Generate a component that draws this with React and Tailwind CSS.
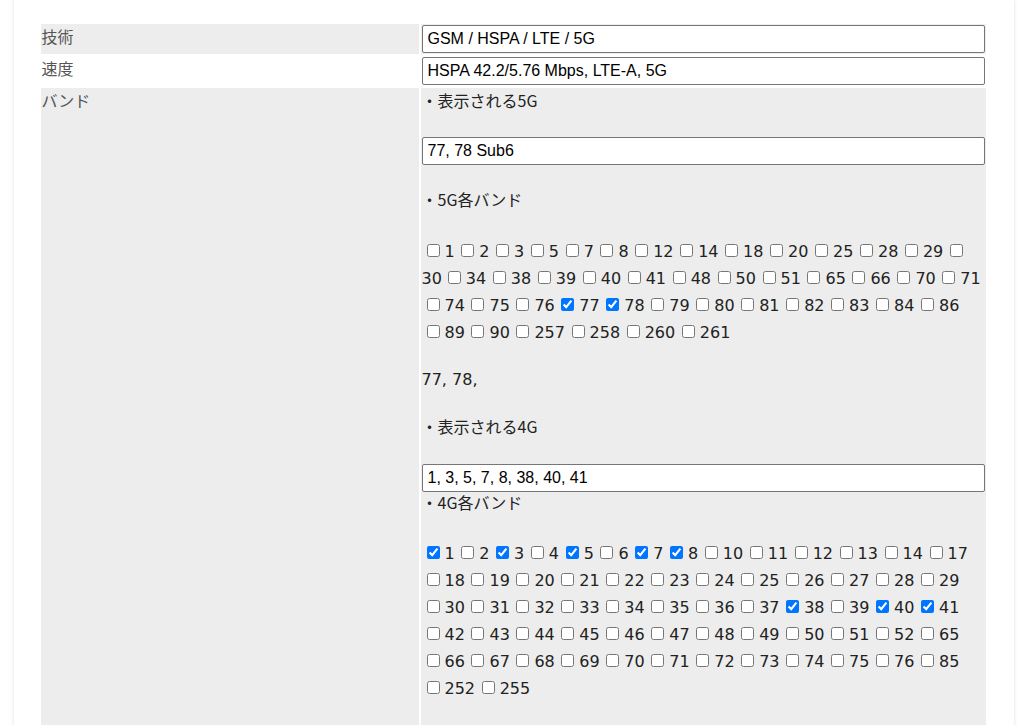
import React from 'react';

// bands: "*" = checked, "|" = lone checkbox at row end, "-" = label that wrapped from previous row
const BANDS_5G = [
  '1 2 3 5 7 8 12 14 18 20 25 28 29 |',
  '-30 34 38 39 40 41 48 50 51 65 66 70 71',
  '74 75 76 *77 *78 79 80 81 82 83 84 86',
  '89 90 257 258 260 261',
];

const BANDS_4G = [
  '*1 2 *3 4 *5 6 *7 *8 10 11 12 13 14 17',
  '18 19 20 21 22 23 24 25 26 27 28 29',
  '30 31 32 33 34 35 36 37 *38 39 *40 *41',
  '42 43 44 45 46 47 48 49 50 51 52 65',
  '66 67 68 69 70 71 72 73 74 75 76 85',
  '252 255',
];

const Box = ({ checked }) => (
  <input
    type="checkbox"
    defaultChecked={checked}
    className="m-0 mb-[3px] ml-[5px] mr-[5px] h-[13px] w-[13px] shrink-0"
  />
);

const BandRow = ({ row }) => (
  <div className="flex h-[27px] items-center whitespace-nowrap">
    {row.split(' ').map((tok, i) => {
      if (tok === '|') return <Box key={i} />;
      if (tok.startsWith('-')) {
        return (
          <span key={i} className="pr-[1px]">
            {tok.slice(1)}
          </span>
        );
      }
      const checked = tok.startsWith('*');
      return (
        <span key={i} className="flex items-center">
          <Box checked={checked} />
          <span className="pr-[1.6px]">{checked ? tok.slice(1) : tok}</span>
        </span>
      );
    })}
  </div>
);

const TextBox = ({ value }) => (
  <input
    type="text"
    defaultValue={value}
    className="block h-[28px] w-full rounded-[2px] border border-[#767676] bg-white px-[5px] font-['Liberation_Sans',Arial,sans-serif] text-[16px] text-black outline-none"
  />
);

const Label = ({ children }) => (
  <div className="px-[1px] py-[1px] text-[16px] leading-[23px] text-[#555]">{children}</div>
);

export default function App() {
  return (
    <div className="h-screen overflow-hidden bg-white font-['Noto_Sans_CJK_JP',sans-serif]">
      <div className="mx-auto min-h-[800px] w-[1000px] bg-white px-[27px] pt-[24px] shadow-[0_0_4px_rgba(0,0,0,0.13)]">
        <div className="grid grid-cols-[378px_565px] gap-x-[2px] gap-y-[2px]">
          {/* 技術 */}
          <div className="bg-[#ededed]">
            <Label>技術</Label>
          </div>
          <div className="bg-[#ededed] p-[1px]">
            <TextBox value="GSM / HSPA / LTE / 5G" />
          </div>

          {/* 速度 */}
          <div className="bg-white">
            <Label>速度</Label>
          </div>
          <div className="bg-white p-[1px]">
            <TextBox value="HSPA 42.2/5.76 Mbps, LTE-A, 5G" />
          </div>

          {/* バンド */}
          <div className="bg-[#ededed]">
            <Label>バンド</Label>
          </div>
          <div className="bg-[#ededed] p-[1px] pb-[60px] text-[16px] text-[#222]">
            <div className="h-[23px] leading-[23px]">・表示される5G</div>
            <div className="mt-[25px]">
              <TextBox value="77, 78 Sub6" />
            </div>
            <div className="mt-[23px] h-[23px] leading-[23px]">・5G各バンド</div>

            <div className="mt-[27px] font-['DejaVu_Sans','Noto_Sans_CJK_JP',sans-serif] text-[16px]">
              {BANDS_5G.map((row, i) => (
                <BandRow key={i} row={row} />
              ))}
            </div>

            <div className="mt-[22px] h-[23px] font-['DejaVu_Sans','Noto_Sans_CJK_JP',sans-serif] leading-[23px]">
              77, 78,
            </div>
            <div className="mt-[24px] h-[23px] leading-[23px]">・表示される4G</div>
            <div className="mt-[26px]">
              <TextBox value="1, 3, 5, 7, 8, 38, 40, 41" />
            </div>
            <div className="h-[20px] leading-[20px]">・4G各バンド</div>

            <div className="mt-[28px] font-['DejaVu_Sans','Noto_Sans_CJK_JP',sans-serif] text-[16px]">
              {BANDS_4G.map((row, i) => (
                <BandRow key={i} row={row} />
              ))}
            </div>
          </div>
        </div>
      </div>
    </div>
  );
}
